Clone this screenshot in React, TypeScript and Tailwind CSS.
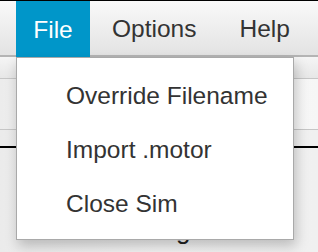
const menuItems = ['Override Filename', 'Import .motor', 'Close Sim'];

const App = () => {
  return (
    <div className="relative w-[318px] h-[252px] overflow-hidden bg-[#f1f1f1] font-['Liberation_Sans',Arial,sans-serif] text-[#333333]">
      {/* menu bar */}
      <div className="flex h-[57px] border-t border-t-black border-b-2 border-b-[#b4b4b4] bg-gradient-to-b from-[#f9f9f9] to-[#e3e3e3] text-[24.5px] pt-[3px]">
        <div className="w-[16px]" />
        <div className="flex w-[74px] -mt-[3px] pt-[3px] -mb-[2px] items-center justify-center bg-[#0096c9] text-white">File</div>
        <div className="ml-[22px] flex items-center">Options</div>
        <div className="ml-[43px] flex items-center">Help</div>
      </div>

      {/* toolbar strip */}
      <div className="h-[22px] border-b border-[#c6c6c6] bg-gradient-to-b from-[#f5f5f5] to-[#e7e7e7]" />
      {/* header strip */}
      <div className="h-[51px] border-b border-[#c6c6c6] bg-gradient-to-r from-[#ececec] via-[#fbfbfb] to-[#f6f6f6]" />

      {/* content */}
      <div className="bg-gradient-to-r from-[#ebebeb] via-[#f2f2f2] to-[#f0f0f0] pt-[16px] h-full">
        <div className="h-[2px] bg-black" />
        <div className="mt-[70px] pl-[176px] text-[26px] leading-[24px] text-[#222222]">g</div>
      </div>

      {/* dropdown */}
      <div className="absolute left-[16px] top-[57px] w-[278px] h-[183px] border border-[#a9a9a9] bg-white pt-[11px] shadow-[2px_6px_12px_rgba(0,0,0,0.22)]">
        {menuItems.map((item) => (
          <div key={item} className="flex h-[54px] items-center pl-[49px] text-[24.5px]">
            {item}
          </div>
        ))}
      </div>
    </div>
  );
};

export default App;
